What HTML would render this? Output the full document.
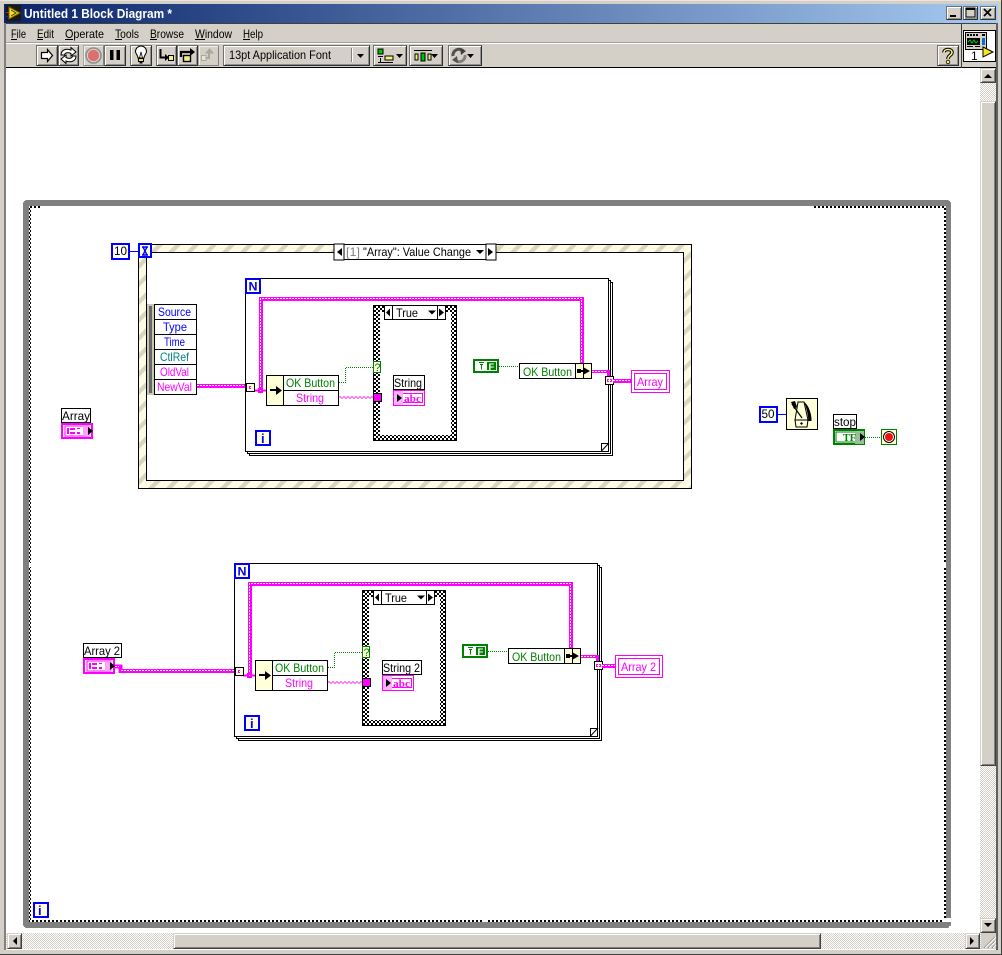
<!DOCTYPE html>
<html>
<head>
<meta charset="utf-8">
<title>Untitled 1 Block Diagram *</title>
<style>
html,body{margin:0;padding:0;width:1002px;height:955px;overflow:hidden;background:#d4d0c8}
#w{position:absolute;left:0;top:0;width:1002px;height:955px;background:#d4d0c8;overflow:hidden}
#w div{position:absolute;box-sizing:border-box}
.b{background:#d4d0c8;border:1px solid #707070;border-right-color:#303030;border-bottom-color:#303030;box-shadow:inset 1px 1px 0 #fff,inset -1px -1px 0 #909090}
.d{background:#d4d0c8;border:1px solid #a8a8a0;border-right-color:#808080;border-bottom-color:#808080;box-shadow:inset 1px 1px 0 #f0f0f0}
.s{background:#d4d0c8;border:1px solid;border-color:#d4d0c8 #404040 #404040 #d4d0c8;box-shadow:inset 1px 1px 0 #fff,inset -1px -1px 0 #808080}
.t{background-color:#fff;background-image:conic-gradient(#d4d0c8 25%,#fff 0 50%,#d4d0c8 0 75%,#fff 0);background-size:2px 2px}
svg{position:absolute;left:0;top:0}
text{font-family:"Liberation Sans",sans-serif;font-size:12px}
</style>
</head>
<body>
<div id="w">
<div style="left:0;top:0;width:1002px;height:1px;background:#e8e6e0"></div>
<div style="left:4px;top:4px;width:994px;height:19px;background:linear-gradient(90deg,#0a246a,#a6caf0)"></div>
<div style="left:5px;top:23px;width:992px;height:1px;background:#404040"></div>
<div style="left:5px;top:42px;width:956px;height:1px;background:#a0a0a0"></div>
<div style="left:5px;top:43px;width:956px;height:1px;background:#fff"></div>
<div style="left:5px;top:67px;width:992px;height:1px;background:#000"></div>
<div style="left:961px;top:23px;width:1px;height:45px;background:#404040"></div>
<div style="left:4px;top:23px;width:2px;height:927px;background:#808080"></div>
<div style="left:996px;top:23px;width:2px;height:927px;background:#606060"></div>
<div style="left:0;top:954px;width:1002px;height:1px;background:#404040"></div>
<div style="left:1001px;top:0;width:1px;height:955px;background:#404040"></div>
<div style="left:6px;top:949px;width:990px;height:1px;background:#fff"></div>
<div style="left:6px;top:68px;width:974px;height:865px;background:#fff"></div>

<!-- window buttons -->
<div class="b" style="left:946px;top:6px;width:16px;height:14px"></div>
<div class="b" style="left:963px;top:6px;width:15px;height:14px"></div>
<div class="b" style="left:980px;top:6px;width:16px;height:14px"></div>

<!-- toolbar -->
<div class="b" style="left:36px;top:45px;width:22px;height:21px"></div>
<div class="b" style="left:58px;top:45px;width:21px;height:21px"></div>
<div class="d" style="left:83px;top:45px;width:21px;height:21px"></div>
<div class="b" style="left:104px;top:45px;width:22px;height:21px"></div>
<div class="b" style="left:130px;top:45px;width:22px;height:21px"></div>
<div class="b" style="left:156px;top:45px;width:21px;height:21px"></div>
<div class="b" style="left:177px;top:45px;width:21px;height:21px"></div>
<div class="d" style="left:198px;top:45px;width:21px;height:21px"></div>
<div class="b" style="left:223px;top:45px;width:147px;height:21px"></div>
<div class="b" style="left:373px;top:45px;width:34px;height:21px"></div>
<div class="b" style="left:409px;top:45px;width:34px;height:21px"></div>
<div class="b" style="left:448px;top:45px;width:34px;height:21px"></div>
<div class="b" style="left:937px;top:45px;width:22px;height:21px"></div>

<!-- icon pane -->
<div style="left:963px;top:30px;width:33px;height:32px;background:#fff;border:1px solid #000"></div>

<!-- scrollbars -->
<div class="t" style="left:980px;top:68px;width:16px;height:865px"></div>
<div class="s" style="left:980px;top:68px;width:16px;height:15px"></div>
<div class="s" style="left:980px;top:101px;width:16px;height:665px"></div>
<div class="s" style="left:980px;top:918px;width:16px;height:15px"></div>
<div class="t" style="left:6px;top:933px;width:975px;height:16px"></div>
<div class="s" style="left:7px;top:933px;width:15px;height:16px"></div>
<div class="s" style="left:173px;top:933px;width:648px;height:16px"></div>
<div class="s" style="left:965px;top:933px;width:15px;height:16px"></div>
<div style="left:981px;top:933px;width:15px;height:16px;background:#d4d0c8"></div>

<svg width="1002" height="955" viewBox="0 0 1002 955" xmlns="http://www.w3.org/2000/svg">
<defs>
<pattern id="hatch" width="18" height="18" patternUnits="userSpaceOnUse">
<rect width="18" height="18" fill="#fdfbe4"/>
<path d="M0 6 L6 0 H12 L0 12 Z M18 6 V12 L12 18 H6 Z" fill="#d8d6c0"/>
</pattern>
<pattern id="chk" width="4" height="4" patternUnits="userSpaceOnUse">
<rect width="4" height="4" fill="#fff"/>
<rect width="2" height="2" fill="#000"/>
<rect x="2" y="2" width="2" height="2" fill="#000"/>
</pattern>
</defs>

<!-- title -->
<text x="24" y="18" fill="#fff" font-weight="bold" style="font-size:12.5px" textLength="148" lengthAdjust="spacingAndGlyphs">Untitled 1 Block Diagram *</text>
<rect x="6" y="5" width="15" height="16" fill="#1a1a10"/>
<path d="M9 7 L20 13 L9 19 Z" fill="#f4e020" stroke="#806000" stroke-width="1"/>
<path d="M11 10 L16 13 L11 16" fill="none" stroke="#404000"/>
<rect x="6" y="12" width="3" height="1" fill="#e02020"/><rect x="6" y="16" width="3" height="1" fill="#2020e0"/>

<!-- window btn glyphs -->
<g shape-rendering="crispEdges">
<rect x="950" y="15" width="6" height="2" fill="#000"/>
<rect x="966" y="8" width="9" height="9" fill="none" stroke="#000"/>
<rect x="966" y="8" width="9" height="2" fill="#000"/>
</g>
<path d="M984 9 L991 16 M991 9 L984 16" stroke="#000" stroke-width="1.7"/>

<!-- menu -->
<g fill="#000">
<text x="11" y="38" textLength="15" lengthAdjust="spacingAndGlyphs">File</text>
<text x="37" y="38" textLength="17" lengthAdjust="spacingAndGlyphs">Edit</text>
<text x="65" y="38" textLength="39" lengthAdjust="spacingAndGlyphs">Operate</text>
<text x="115" y="38" textLength="24" lengthAdjust="spacingAndGlyphs">Tools</text>
<text x="150" y="38" textLength="34" lengthAdjust="spacingAndGlyphs">Browse</text>
<text x="195" y="38" textLength="37" lengthAdjust="spacingAndGlyphs">Window</text>
<text x="243" y="38" textLength="20" lengthAdjust="spacingAndGlyphs">Help</text>
</g>
<g fill="#000" shape-rendering="crispEdges">
<rect x="11" y="39" width="6" height="1"/><rect x="37" y="39" width="6" height="1"/><rect x="65" y="39" width="8" height="1"/><rect x="115" y="39" width="7" height="1"/><rect x="150" y="39" width="7" height="1"/><rect x="195" y="39" width="10" height="1"/><rect x="243" y="39" width="7" height="1"/>
</g>

<!-- toolbar icons -->
<path d="M41.5 52.5 H47.5 V49.5 L52.5 55.5 L47.5 61.5 V58.5 H41.5 Z" fill="#fff" stroke="#000" stroke-width="1.2"/>
<path d="M61 55 C61 50 66 48 71 50 V47.5 L76 52 L71 56 V53.5 C68 52 65 52.5 64.5 55 Z" fill="#fff" stroke="#000"/>
<path d="M76 56 C76 61 71 63 66 61 V63.5 L61 59 L66 55 V57.5 C69 59 72 58.5 72.5 56 Z" fill="#fff" stroke="#000"/>
<circle cx="93.5" cy="55.5" r="7.5" fill="#d8d4cc" stroke="#8c8c8c" stroke-width="1.6"/>
<circle cx="93.5" cy="55.5" r="5.6" fill="#dc7070"/>
<g shape-rendering="crispEdges"><rect x="110" y="50" width="3.5" height="10" fill="#000"/><rect x="116.5" y="50" width="3.5" height="10" fill="#000"/></g>
<path d="M138 58 C138 55 135.5 54 135.5 51.5 A5.5 5.5 0 0 1 146.5 51.5 C146.5 54 144 55 144 58 Z" fill="#fff" stroke="#000"/>
<path d="M139.5 58 L141 52 L142.5 58" fill="none" stroke="#000" stroke-width=".8"/>
<rect x="138.5" y="58.5" width="5" height="3" fill="#f0e040" stroke="#000"/>
<rect x="139.5" y="62" width="3" height="1.5" fill="#000"/>
<path d="M160.5 49 V57.5 H166" fill="none" stroke="#000" stroke-width="2"/>
<path d="M165 54 L169 57.5 L165 61 Z" fill="#000"/>
<rect x="168.5" y="55.5" width="5" height="5" fill="#f4f080" stroke="#000"/>
<path d="M181 57 V52 H191" fill="none" stroke="#000" stroke-width="2.2"/>
<path d="M190 48 L195 52 L190 56 Z" fill="#000"/>
<rect x="183.5" y="55.5" width="7" height="6" fill="#f4f080" stroke="#000" stroke-width="1.4"/>
<g fill="none" stroke="#a8a8a0">
<path d="M203 58 H209 V52" stroke-width="2"/><path d="M206 53 L209.5 49 L213 53 Z" fill="#a8a8a0"/><rect x="201.5" y="55.5" width="4.5" height="5" fill="#e8e6d0"/></g>
<text x="229" y="59" fill="#000" textLength="102" lengthAdjust="spacingAndGlyphs">13pt Application Font</text>
<g shape-rendering="crispEdges">
<rect x="351" y="48" width="1" height="14" fill="#808080"/><rect x="352" y="48" width="1" height="14" fill="#fff"/>
<rect x="378" y="49" width="5" height="5" fill="#00c000" stroke="#000"/>
<rect x="385" y="56" width="8" height="4" fill="#f4f080" stroke="#000"/>
<rect x="378" y="56" width="5" height="1" fill="#000"/><rect x="380" y="58" width="1" height="4" fill="#000"/><rect x="378" y="62" width="15" height="1" fill="#000"/>
<rect x="415" y="54" width="3" height="6" fill="#f4f080" stroke="#000"/>
<rect x="421" y="53" width="4" height="8" fill="#00c000" stroke="#000"/>
<rect x="428" y="54" width="3" height="6" fill="#f4f080" stroke="#000"/>
<rect x="414" y="50" width="18" height="1" fill="#000"/>
</g>
<path d="M396 54 h7 l-3.5 4 Z M431 54 h7 l-3.5 4 Z M467 54 h7 l-3.5 4 Z M357 54 h7 l-3.5 4 Z" fill="#000"/>
<path d="M453 56 A6 6 0 0 1 464 52" fill="none" stroke="#505050" stroke-width="3"/>
<path d="M465 55 A6 6 0 0 1 454 59" fill="none" stroke="#808080" stroke-width="3"/>
<path d="M460 48 L466 51 L461 55 Z" fill="#404040"/><path d="M458 63 L452 60 L457 56 Z" fill="#505050"/>
<path d="M944 52.5 C944 48.5 952 48.5 952 52.5 C952 55.5 948 55 948 59" fill="none" stroke="#000" stroke-width="3.6"/>
<path d="M944 52.5 C944 48.5 952 48.5 952 52.5 C952 55.5 948 55 948 59" fill="none" stroke="#f4f080" stroke-width="1.6"/>
<circle cx="948" cy="62" r="1.8" fill="#f4f080" stroke="#000" stroke-width=".8"/>

<!-- VI icon -->
<g shape-rendering="crispEdges">
<rect x="965.5" y="32.5" width="21" height="17" fill="#d4d0c8" stroke="#000"/>
<rect x="967" y="34" width="2" height="2" fill="#000"/><rect x="970" y="34" width="2" height="2" fill="#000"/><rect x="973" y="34" width="2" height="2" fill="#000"/><rect x="976" y="34" width="2" height="2" fill="#000"/><rect x="982" y="34" width="3" height="2" fill="#000"/>
<rect x="967" y="38" width="13" height="7" fill="#000"/>
<rect x="982" y="38" width="3" height="7" fill="#0070c0"/>
<rect x="967" y="46" width="6" height="1" fill="#000"/><rect x="975" y="46" width="5" height="1" fill="#000"/>
</g>
<path d="M968 42 l2 -2 l2 3 l2 -3 l2 3 l2 -2" fill="none" stroke="#00d000"/>
<path d="M983 47 L993 52 L983 57 Z" fill="#f8e820" stroke="#000"/>
<text x="971" y="60" fill="#000" style="font-size:12px">1</text>

<!-- scrollbar arrows -->
<path d="M984 78 h8 l-4 -4 Z M984 923 h8 l-4 4 Z M17 937 v8 l-4 -4 Z M970 937 v8 l4 -4 Z" fill="#000"/>
<path d="M984 948 L995 937 M988 948 L995 941 M992 948 L995 945" stroke="#808080" fill="none"/>
<path d="M985 948 L996 937 M989 948 L996 941 M993 948 L996 945" stroke="#fff" fill="none"/>

<!-- outer while loop -->
<g shape-rendering="crispEdges">
<rect x="23" y="200" width="928" height="728" rx="4" fill="#808080"/>
<rect x="29" y="206" width="917" height="716" fill="#fff"/>
<rect x="29" y="206" width="2" height="716" fill="url(#chk)"/>
<rect x="29" y="206" width="13" height="2" fill="url(#chk)"/>
<rect x="813" y="206" width="133" height="2" fill="url(#chk)"/>
<rect x="944" y="206" width="2" height="714" fill="url(#chk)"/>
<rect x="29" y="920" width="915" height="2" fill="url(#chk)"/>
<rect x="946" y="918" width="6" height="4" fill="#fff"/>
<rect x="949" y="926" width="2" height="2" fill="#fff"/>
<rect x="29" y="563" width="2" height="4" fill="#fff"/><rect x="944" y="563" width="2" height="4" fill="#fff"/><rect x="483" y="920" width="4" height="2" fill="#fff"/>
<rect x="34" y="903" width="14" height="14" fill="#ffffd8" stroke="#0000ff" stroke-width="2"/>
</g>
<text x="38" y="915" fill="#0000ff" font-weight="bold" style="font-size:13px">i</text>

<!-- array control -->
<g shape-rendering="crispEdges">
<rect x="61.5" y="408.5" width="29" height="14" fill="#fff" stroke="#000"/>
<rect x="62" y="424" width="30" height="14" fill="#fff" stroke="#ff00ff" stroke-width="2"/>
<rect x="65" y="426" width="24" height="10" fill="#fff" stroke="#ff00ff" stroke-width="1"/>
<rect x="67" y="428" width="2" height="6" fill="#ff00ff"/><rect x="70" y="428" width="5" height="2" fill="#ff00ff"/><rect x="70" y="432" width="5" height="2" fill="#ff00ff"/><rect x="77" y="428" width="3" height="1" fill="#ff00ff"/><rect x="77" y="432" width="3" height="2" fill="#ff00ff"/><rect x="83" y="426" width="7" height="10" fill="#ffa0ff"/>
</g>
<path d="M88 427 L93 431 L88 435 Z" fill="#000"/>
<text x="62" y="420" fill="#000" textLength="28" lengthAdjust="spacingAndGlyphs">Array</text>

<!-- array 2 control -->
<g shape-rendering="crispEdges">
<rect x="83.5" y="643.5" width="38" height="14" fill="#fff" stroke="#000"/>
<rect x="84" y="659" width="30" height="14" fill="#fff" stroke="#ff00ff" stroke-width="2"/>
<rect x="87" y="661" width="24" height="10" fill="#fff" stroke="#ff00ff" stroke-width="1"/>
<rect x="89" y="663" width="2" height="6" fill="#ff00ff"/><rect x="92" y="663" width="5" height="2" fill="#ff00ff"/><rect x="92" y="667" width="5" height="2" fill="#ff00ff"/><rect x="99" y="663" width="3" height="1" fill="#ff00ff"/><rect x="99" y="667" width="3" height="2" fill="#ff00ff"/><rect x="105" y="661" width="7" height="10" fill="#ffa0ff"/>
<path d="M115 666.5 H120.5 V671 H235" fill="none" stroke="#ff00ff" stroke-width="4"/>
<path d="M121 670.5 H235" fill="none" stroke="#fff" stroke-width="1" stroke-dasharray="2 1"/>
<path d="M115 666.5 H119" fill="none" stroke="#fff" stroke-width="1" stroke-dasharray="2 1"/>
</g>
<path d="M110 662 L115 666 L110 670 Z" fill="#000"/>
<text x="84" y="655" fill="#000" textLength="36" lengthAdjust="spacingAndGlyphs">Array 2</text>

<!-- event structure -->
<g shape-rendering="crispEdges">
<path fill-rule="evenodd" d="M138 244 H692 V489 H138 Z M147 252 V481 H683 V252 Z" fill="url(#hatch)"/>
<rect x="138.5" y="244.5" width="553" height="244" fill="none" stroke="#000"/>
<rect x="146.5" y="252.5" width="537" height="228" fill="#fff" stroke="#000"/>
<rect x="334.5" y="244.5" width="161" height="15" fill="#fff" stroke="#000"/>
<rect x="334" y="244" width="10" height="16" fill="#fff" stroke="#000" stroke-width="1"/>
<rect x="486" y="244" width="10" height="16" fill="#fff" stroke="#000" stroke-width="1"/>
<rect x="112" y="244" width="17" height="15" fill="#fff" stroke="#0000ff" stroke-width="2"/>
<rect x="130" y="251" width="8" height="1" fill="#0000ff"/>
<rect x="139" y="244" width="12" height="13" fill="#ffffd8" stroke="#0000ff" stroke-width="2"/>
<rect x="147" y="304" width="7" height="91" fill="#c8c8b0"/>
<rect x="149" y="306" width="3" height="87" fill="#686868"/>
<rect x="154.5" y="304.5" width="42" height="90" fill="#fff" stroke="#000"/>
<rect x="154" y="319" width="43" height="1" fill="#000"/><rect x="154" y="334" width="43" height="1" fill="#000"/><rect x="154" y="349" width="43" height="1" fill="#000"/><rect x="154" y="364" width="43" height="1" fill="#000"/><rect x="154" y="379" width="43" height="1" fill="#000"/>
<path d="M197 386 H246" fill="none" stroke="#ff00ff" stroke-width="4"/>
<path d="M197 385.5 H246" fill="none" stroke="#fff" stroke-width="1" stroke-dasharray="2 1"/>
</g>
<path d="M142 247 h6 M142 255 h6 M143 247 L147 255 M147 247 L143 255" stroke="#0000ff" stroke-width="1.4" fill="none"/>
<path d="M342 248 L337 252 L342 256 Z M488 248 L493 252 L488 256 Z M476 250 h8 l-4 4 Z" fill="#000"/>
<text x="346" y="256" fill="#808080" textLength="14" lengthAdjust="spacingAndGlyphs">[1]</text>
<text x="363" y="256" fill="#000" textLength="108" lengthAdjust="spacingAndGlyphs">"Array": Value Change</text>
<text x="114" y="255" fill="#000" textLength="13" lengthAdjust="spacingAndGlyphs">10</text>
<g fill="#0000ff">
<text x="158" y="316" textLength="33" lengthAdjust="spacingAndGlyphs">Source</text>
<text x="163" y="331" textLength="24" lengthAdjust="spacingAndGlyphs">Type</text>
<text x="164" y="346" textLength="21" lengthAdjust="spacingAndGlyphs">Time</text>
</g>
<text x="160" y="361" fill="#008080" textLength="29" lengthAdjust="spacingAndGlyphs">CtlRef</text>
<text x="160" y="376" fill="#ff00ff" textLength="29" lengthAdjust="spacingAndGlyphs">OldVal</text>
<text x="157" y="391" fill="#ff00ff" textLength="35" lengthAdjust="spacingAndGlyphs">NewVal</text>

<!-- for loop 1 -->
<g>
<g shape-rendering="crispEdges">
<rect x="249.5" y="282.5" width="363" height="173" fill="#fff" stroke="#000"/>
<rect x="247.5" y="280.5" width="363" height="173" fill="#fff" stroke="#000"/>
<rect x="245.5" y="278.5" width="363" height="173" fill="#fff" stroke="#000"/>
<rect x="246" y="279" width="14" height="14" fill="#ffffd8" stroke="#0000ff" stroke-width="2"/>
<rect x="256" y="431" width="14" height="14" fill="#ffffd8" stroke="#0000ff" stroke-width="2"/>
<path d="M254 390.5 H266" stroke="#ff00ff" stroke-width="2" fill="none"/>
<path d="M261 390 V299 H582 V363" fill="none" stroke="#ff00ff" stroke-width="4"/>
<path d="M260.5 390 V298.5 H581.5 V363" fill="none" stroke="#fff" stroke-width="1" stroke-dasharray="2 1"/>
<rect x="258" y="388" width="5" height="5" fill="#ff00ff"/><rect x="260" y="390" width="1" height="1" fill="#fff"/>
<rect x="246.5" y="383.5" width="8" height="8" fill="#ffffd8" stroke="#000"/>
<path d="M251 386.5 H249.5 V388.5 H251" fill="none" stroke="#ff00ff"/>
<rect x="266.5" y="375.5" width="72" height="30" fill="#fff" stroke="#000"/>
<rect x="267" y="376" width="16" height="29" fill="#ffffd8"/>
<rect x="283" y="375" width="1" height="31" fill="#000"/>
<rect x="283" y="390" width="56" height="1" fill="#000"/>
<rect x="270" y="389" width="8" height="2" fill="#000"/>
<path d="M339 382.5 H345.5 V367.5 H373" fill="none" stroke="#008000" stroke-dasharray="1 1"/>
<path d="M339 397 H373 M382 397 H393" fill="none" stroke="#ff00ff" stroke-dasharray="2 2"/>
<path d="M341 398 H373 M384 398 H393" fill="none" stroke="#ff00ff" stroke-dasharray="2 2"/>
<rect x="373" y="305" width="84" height="136" fill="url(#chk)"/>
<rect x="373.5" y="305.5" width="83" height="135" fill="none" stroke="#000"/>
<rect x="380" y="312" width="71" height="123" fill="#fff"/>
<rect x="384.5" y="305.5" width="61" height="14" fill="#fff" stroke="#000"/>
<rect x="392" y="305" width="1" height="15" fill="#000"/><rect x="437" y="305" width="1" height="15" fill="#000"/>
<rect x="373.5" y="361.5" width="7" height="11" fill="#ffffd8" stroke="#008000"/>
<rect x="373.5" y="393.5" width="8" height="8" fill="#ff00ff" stroke="#000"/>
<rect x="393.5" y="390.5" width="31" height="15" fill="#fff" stroke="#ff00ff"/>
<rect x="395.5" y="393.5" width="27" height="9" fill="#fff" stroke="#ff00ff"/>
<rect x="394" y="391" width="9" height="14" fill="#ffb0ff"/>
<rect x="393.5" y="375.5" width="31" height="14" fill="#fff" stroke="#000"/>
<rect x="474" y="360" width="24" height="12" fill="#fff" stroke="#008000" stroke-width="2"/>
<rect x="487" y="362" width="9" height="8" fill="#008000"/>
<path d="M499 366.5 H519" fill="none" stroke="#008000" stroke-dasharray="1 1"/>
<rect x="519.5" y="363.5" width="72" height="15" fill="#fff" stroke="#000"/>
<rect x="575" y="364" width="17" height="14" fill="#ffffd8"/>
<rect x="575" y="363" width="1" height="16" fill="#000"/><rect x="583" y="363" width="1" height="16" fill="#000"/><rect x="591" y="363" width="1" height="16" fill="#000"/>
<rect x="577" y="370" width="10" height="2" fill="#000"/>
<rect x="577" y="369" width="4" height="4" fill="#000"/>
<path d="M592 371.5 H608.5 V377" fill="none" stroke="#ff00ff" stroke-width="3"/>
<path d="M592 371.5 H607" fill="none" stroke="#fff" stroke-dasharray="2 1"/>
<rect x="605.5" y="376.5" width="8" height="8" fill="#ffffd8" stroke="#000"/>
<path d="M609 379.5 H607.5 V381.5 H609 M610 379.5 H611.5 V381.5 H610" fill="none" stroke="#ff00ff"/>
</g>
<path d="M601.5 451.5 V443.5 H608.5 L601.5 451" fill="#fff" stroke="#000"/>
<text x="248.5" y="290.5" fill="#0000ff" font-weight="bold" style="font-size:12px" textLength="9" lengthAdjust="spacingAndGlyphs">N</text>
<text x="261" y="443" fill="#0000ff" font-weight="bold" style="font-size:13px">i</text>
<text x="286" y="387" fill="#008000" textLength="49" lengthAdjust="spacingAndGlyphs">OK Button</text>
<text x="296" y="402" fill="#ff00ff" textLength="28" lengthAdjust="spacingAndGlyphs">String</text>
<path d="M276 386 L282 390.5 L276 395 Z" fill="#000"/>
<text x="374.5" y="371" fill="#008000" style="font-size:11px">?</text>
<path d="M390 308.5 L386 312.5 L390 316.5 Z M439 308.5 L444 312.5 L439 316.5 Z M428 310.5 h8 l-4 4 Z" fill="#000"/>
<text x="396" y="317" fill="#000" textLength="22" lengthAdjust="spacingAndGlyphs">True</text>
<text x="394" y="387" fill="#000" textLength="28" lengthAdjust="spacingAndGlyphs">String</text>
<path d="M397 394 L402 398 L397 402 Z" fill="#000"/>
<text x="404" y="402" fill="#ff00ff" font-weight="bold" style="font-family:'Liberation Serif',serif;font-size:11px" textLength="17" lengthAdjust="spacingAndGlyphs">abc</text>
<path d="M479 362.5 h5 M480 364.5 h3 M481.5 364.5 v5" stroke="#008000" fill="none"/>
<text x="488.5" y="370" fill="#fff" font-weight="bold" style="font-size:9.5px">F</text>
<text x="523" y="376" fill="#008000" textLength="49" lengthAdjust="spacingAndGlyphs">OK Button</text>
<path d="M583 367 L590 371 L583 375 Z" fill="#000"/>
</g>

<!-- array indicator 1 -->
<g shape-rendering="crispEdges">
<path d="M613 381 H631" fill="none" stroke="#ff00ff" stroke-width="4"/>
<path d="M613 380.5 H631" fill="none" stroke="#fff" stroke-dasharray="2 1"/>
<rect x="631.5" y="370.5" width="38" height="22" fill="#fff" stroke="#ff00ff"/>
<rect x="634.5" y="373.5" width="32" height="16" fill="#fff" stroke="#ff00ff"/>
</g>
<text x="637" y="386" fill="#ff00ff" textLength="26" lengthAdjust="spacingAndGlyphs">Array</text>

<!-- wait & stop -->
<g shape-rendering="crispEdges">
<rect x="760" y="407" width="17" height="15" fill="#fff" stroke="#0000ff" stroke-width="2"/>
<rect x="778" y="414" width="8" height="1" fill="#0000ff"/>
<rect x="786.5" y="398.5" width="31" height="31" fill="#ffffd8" stroke="#000"/>
<rect x="833.5" y="414.5" width="23" height="14" fill="#fff" stroke="#000"/>
<rect x="834" y="430" width="30" height="14" fill="#fff" stroke="#008000" stroke-width="2"/>
<rect x="836" y="432" width="26" height="10" fill="#fff" stroke="#008000" stroke-width="1"/>
<rect x="855" y="431" width="9" height="13" fill="#98c098"/>
<path d="M865 437.5 H881" fill="none" stroke="#008000" stroke-dasharray="1 1"/>
<rect x="881.5" y="429.5" width="15" height="15" fill="#ffffd8" stroke="#008000"/>
</g>
<path d="M798 402 L804 402 L808 420 L795 420 Z" fill="#ffffd8" stroke="#000"/>
<path d="M804 402 C808 404 812 414 811.5 421 L808.5 421 C808 414 806 406 804 402 Z" fill="#000"/>
<path d="M792 404 L802 418" stroke="#000" stroke-width="1.2"/>
<path d="M791 402 l4 -1 l2 6 l-3 2 Z" fill="#000"/>
<path d="M795 420 H808 L807 427 H796 Z" fill="#ffffd8" stroke="#000"/>
<path d="M801.5 422 l1.5 1.5 l-1.5 1.5 l-1.5 -1.5 Z" fill="#000"/>
<text x="761.5" y="418" fill="#000" textLength="13" lengthAdjust="spacingAndGlyphs">50</text>
<text x="834" y="426" fill="#000" textLength="22" lengthAdjust="spacingAndGlyphs">stop</text>
<text x="843" y="441" fill="#008000" font-weight="bold" style="font-family:'Liberation Serif',serif;font-size:11px" textLength="13" lengthAdjust="spacingAndGlyphs">TF</text>
<path d="M860 433 L865 437 L860 441 Z" fill="#000"/>
<circle cx="889" cy="437" r="5.5" fill="#fff" stroke="#000"/>
<circle cx="889" cy="437" r="4" fill="#f01010"/>

<!-- for loop 2 -->
<g transform="translate(-11,285)">
<g shape-rendering="crispEdges">
<rect x="249.5" y="282.5" width="363" height="173" fill="#fff" stroke="#000"/>
<rect x="247.5" y="280.5" width="363" height="173" fill="#fff" stroke="#000"/>
<rect x="245.5" y="278.5" width="363" height="173" fill="#fff" stroke="#000"/>
<rect x="246" y="279" width="14" height="14" fill="#ffffd8" stroke="#0000ff" stroke-width="2"/>
<rect x="256" y="431" width="14" height="14" fill="#ffffd8" stroke="#0000ff" stroke-width="2"/>
<path d="M254 390.5 H266" stroke="#ff00ff" stroke-width="2" fill="none"/>
<path d="M261 390 V299 H582 V363" fill="none" stroke="#ff00ff" stroke-width="4"/>
<path d="M260.5 390 V298.5 H581.5 V363" fill="none" stroke="#fff" stroke-width="1" stroke-dasharray="2 1"/>
<rect x="258" y="388" width="5" height="5" fill="#ff00ff"/><rect x="260" y="390" width="1" height="1" fill="#fff"/>
<rect x="246.5" y="382.5" width="8" height="8" fill="#ffffd8" stroke="#000"/>
<path d="M251 385.5 H249.5 V387.5 H251" fill="none" stroke="#ff00ff"/>
<rect x="266.5" y="375.5" width="72" height="30" fill="#fff" stroke="#000"/>
<rect x="267" y="376" width="16" height="29" fill="#ffffd8"/>
<rect x="283" y="375" width="1" height="31" fill="#000"/>
<rect x="283" y="390" width="56" height="1" fill="#000"/>
<rect x="270" y="389" width="8" height="2" fill="#000"/>
<path d="M339 382.5 H345.5 V367.5 H373" fill="none" stroke="#008000" stroke-dasharray="1 1"/>
<path d="M339 397 H373 M382 397 H393" fill="none" stroke="#ff00ff" stroke-dasharray="2 2"/>
<path d="M341 398 H373 M384 398 H393" fill="none" stroke="#ff00ff" stroke-dasharray="2 2"/>
<rect x="373" y="305" width="84" height="136" fill="url(#chk)"/>
<rect x="373.5" y="305.5" width="83" height="135" fill="none" stroke="#000"/>
<rect x="380" y="312" width="71" height="123" fill="#fff"/>
<rect x="384.5" y="305.5" width="61" height="14" fill="#fff" stroke="#000"/>
<rect x="392" y="305" width="1" height="15" fill="#000"/><rect x="437" y="305" width="1" height="15" fill="#000"/>
<rect x="373.5" y="361.5" width="7" height="11" fill="#ffffd8" stroke="#008000"/>
<rect x="373.5" y="393.5" width="8" height="8" fill="#ff00ff" stroke="#000"/>
<rect x="393.5" y="390.5" width="31" height="15" fill="#fff" stroke="#ff00ff"/>
<rect x="395.5" y="393.5" width="27" height="9" fill="#fff" stroke="#ff00ff"/>
<rect x="394" y="391" width="9" height="14" fill="#ffb0ff"/>
<rect x="393.5" y="375.5" width="39" height="14" fill="#fff" stroke="#000"/>
<rect x="474" y="360" width="24" height="12" fill="#fff" stroke="#008000" stroke-width="2"/>
<rect x="487" y="362" width="9" height="8" fill="#008000"/>
<path d="M499 366.5 H519" fill="none" stroke="#008000" stroke-dasharray="1 1"/>
<rect x="519.5" y="363.5" width="72" height="15" fill="#fff" stroke="#000"/>
<rect x="575" y="364" width="17" height="14" fill="#ffffd8"/>
<rect x="575" y="363" width="1" height="16" fill="#000"/><rect x="583" y="363" width="1" height="16" fill="#000"/><rect x="591" y="363" width="1" height="16" fill="#000"/>
<rect x="577" y="370" width="10" height="2" fill="#000"/>
<rect x="577" y="369" width="4" height="4" fill="#000"/>
<path d="M592 371.5 H608.5 V377" fill="none" stroke="#ff00ff" stroke-width="3"/>
<path d="M592 371.5 H607" fill="none" stroke="#fff" stroke-dasharray="2 1"/>
<rect x="605.5" y="376.5" width="8" height="8" fill="#ffffd8" stroke="#000"/>
<path d="M609 379.5 H607.5 V381.5 H609 M610 379.5 H611.5 V381.5 H610" fill="none" stroke="#ff00ff"/>
</g>
<path d="M601.5 451.5 V443.5 H608.5 L601.5 451" fill="#fff" stroke="#000"/>
<text x="248.5" y="290.5" fill="#0000ff" font-weight="bold" style="font-size:12px" textLength="9" lengthAdjust="spacingAndGlyphs">N</text>
<text x="261" y="443" fill="#0000ff" font-weight="bold" style="font-size:13px">i</text>
<text x="286" y="387" fill="#008000" textLength="49" lengthAdjust="spacingAndGlyphs">OK Button</text>
<text x="296" y="402" fill="#ff00ff" textLength="28" lengthAdjust="spacingAndGlyphs">String</text>
<path d="M276 386 L282 390.5 L276 395 Z" fill="#000"/>
<text x="374.5" y="371" fill="#008000" style="font-size:11px">?</text>
<path d="M390 308.5 L386 312.5 L390 316.5 Z M439 308.5 L444 312.5 L439 316.5 Z M428 310.5 h8 l-4 4 Z" fill="#000"/>
<text x="396" y="317" fill="#000" textLength="22" lengthAdjust="spacingAndGlyphs">True</text>
<text x="394" y="387" fill="#000" textLength="37" lengthAdjust="spacingAndGlyphs">String 2</text>
<path d="M397 394 L402 398 L397 402 Z" fill="#000"/>
<text x="404" y="402" fill="#ff00ff" font-weight="bold" style="font-family:'Liberation Serif',serif;font-size:11px" textLength="17" lengthAdjust="spacingAndGlyphs">abc</text>
<path d="M479 362.5 h5 M480 364.5 h3 M481.5 364.5 v5" stroke="#008000" fill="none"/>
<text x="488.5" y="370" fill="#fff" font-weight="bold" style="font-size:9.5px">F</text>
<text x="523" y="376" fill="#008000" textLength="49" lengthAdjust="spacingAndGlyphs">OK Button</text>
<path d="M583 367 L590 371 L583 375 Z" fill="#000"/>
</g>

<!-- array indicator 2 -->
<g shape-rendering="crispEdges">
<path d="M602 666 H615" fill="none" stroke="#ff00ff" stroke-width="4"/>
<path d="M602 665.5 H615" fill="none" stroke="#fff" stroke-dasharray="2 1"/>
<rect x="615.5" y="655.5" width="47" height="22" fill="#fff" stroke="#ff00ff"/>
<rect x="618.5" y="658.5" width="41" height="16" fill="#fff" stroke="#ff00ff"/>
</g>
<text x="621" y="671" fill="#ff00ff" textLength="35" lengthAdjust="spacingAndGlyphs">Array 2</text>
</svg>
</div>
</body>
</html>
